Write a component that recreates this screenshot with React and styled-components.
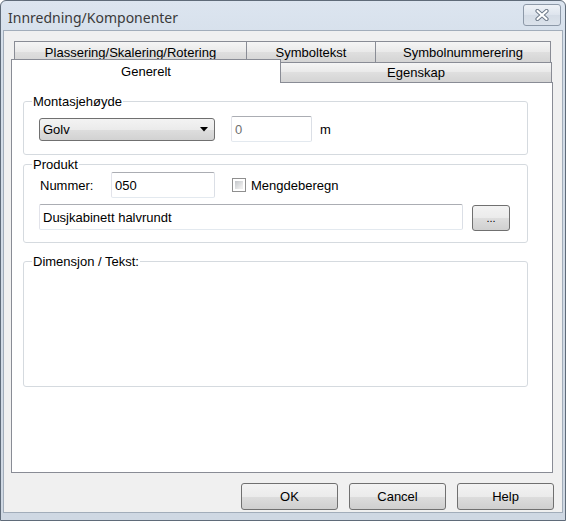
import React from "react";
import styled, { createGlobalStyle } from "styled-components";

const GlobalStyle = createGlobalStyle`
  html, body {
    margin: 0;
    padding: 0;
    background: #ffffff;
  }
  body {
    font-family: "Liberation Sans", Arial, sans-serif;
    font-size: 13px;
    color: #000;
  }
  * {
    box-sizing: border-box;
  }
`;

const backTabs = [
  { label: "Plassering/Skalering/Rotering", width: 233 },
  { label: "Symboltekst", width: 130 },
  { label: "Symbolnummerering", width: 176 },
];

const CloseIcon = () => (
  <svg width="16" height="12" viewBox="0 0 16 12">
    <path d="M3.5 2 L12.5 10 M12.5 2 L3.5 10" stroke="#6f7b8a" strokeWidth="4.2" strokeLinecap="round" fill="none" />
    <path d="M3.5 2 L12.5 10 M12.5 2 L3.5 10" stroke="#ffffff" strokeWidth="2.2" strokeLinecap="round" fill="none" />
  </svg>
);

const ComboArrow = () => (
  <svg width="8" height="5" viewBox="0 0 8 5">
    <path d="M0 0 H8 L4 4.5 Z" fill="#000" />
  </svg>
);

export default function App() {
  return (
    <>
      <GlobalStyle />
      <Window>
        <TitleBar>
          <Title>Innredning/Komponenter</Title>
          <CloseButton aria-label="Lukk">
            <CloseIcon />
          </CloseButton>
        </TitleBar>
        <Client>
          <Tabs>
            <TabRow $indent={3}>
              {backTabs.map((t, i) => (
                <Tab key={t.label} $width={t.width} $first={i === 0}>
                  {t.label}
                </Tab>
              ))}
            </TabRow>
            <TabRow $front>
              <ActiveTab>Generelt</ActiveTab>
              <Tab $width={271} $height={20} $noLeft>
                Egenskap
              </Tab>
            </TabRow>
          </Tabs>
          <Panel>
            <Group $top={11} $height={61}>
              <Legend>Montasjehøyde</Legend>
              <Row $padTop={7}>
                <Combo>
                  <span>Golv</span>
                  <ComboArrow />
                </Combo>
                <TextBox $width={81} $gap={16} $muted readOnly value="0" />
                <Unit>m</Unit>
              </Row>
            </Group>

            <Group $top={2} $height={86}>
              <Legend>Produkt</Legend>
              <Row>
                <FieldLabel>Nummer:</FieldLabel>
                <TextBox $width={104} readOnly value="050" />
                <CheckLabel>
                  <CheckBox />
                  Mengdeberegn
                </CheckLabel>
              </Row>
              <Row $padTop={6} $start>
                <TextBox $width={424} readOnly value="Dusjkabinett halvrundt" />
                <SmallButton>...</SmallButton>
              </Row>
            </Group>

            <Group $top={11} $height={133}>
              <Legend>Dimensjon / Tekst:</Legend>
            </Group>
          </Panel>
          <ButtonRow>
            <DialogButton>OK</DialogButton>
            <DialogButton>Cancel</DialogButton>
            <DialogButton>Help</DialogButton>
          </ButtonRow>
        </Client>
      </Window>
    </>
  );
}

//****** styling ******//

const Window = styled.div`
  width: 566px;
  height: 521px;
  border: 1px solid #5f6b79;
  border-radius: 6px 6px 0 0;
  background: linear-gradient(#dce5f0, #d3dde8 60px, #cfd8e3);
  display: flex;
  flex-direction: column;
  overflow: hidden;
`;

const TitleBar = styled.div`
  height: 29px;
  flex: none;
  display: flex;
  align-items: center;
  justify-content: space-between;
  padding: 1px 4px 0 7px;
`;

const Title = styled.span`
  font-family: "Noto Sans", "DejaVu Sans", sans-serif;
  font-size: 14px;
  color: #3a3a3a;
  padding-top: 2px;
`;

const CloseButton = styled.button`
  width: 38px;
  height: 22px;
  margin-top: -2px;
  padding: 0;
  border: 1px solid #8d99a8;
  border-radius: 3px;
  background: linear-gradient(#eef2f7, #dde4ed 50%, #d4dce6 50%, #dbe2eb);
  display: flex;
  align-items: center;
  justify-content: center;
`;

const Client = styled.div`
  flex: 1;
  margin: 0 2px 7px 2px;
  border: 1px solid #a2adba;
  background: #f0f0f0;
  padding: 10px 9px 0 7px;
  display: flex;
  flex-direction: column;
`;

const Tabs = styled.div`
  height: 41px;
  flex: none;
  display: flex;
  flex-direction: column;
`;

const TabRow = styled.div`
  display: flex;
  align-items: flex-end;
  height: ${(p) => (p.$front ? 20 : 21)}px;
  padding-left: ${(p) => p.$indent || 0}px;
`;

const Tab = styled.div`
  width: ${(p) => p.$width}px;
  height: ${(p) => p.$height || 21}px;
  margin-left: ${(p) => (p.$first || p.$noLeft ? 0 : -1)}px;
  border: 1px solid #898c95;
  border-bottom: none;
  ${(p) => p.$noLeft && "border-left: none;"}
  background: linear-gradient(#f5f5f5, #e9e9e9 50%, #dfdfdf 50%, #d4d4d4);
  display: flex;
  align-items: center;
  justify-content: center;
  font-size: 13px;
  white-space: nowrap;
`;

const ActiveTab = styled.div`
  position: relative;
  z-index: 2;
  width: 270px;
  height: 24px;
  margin-bottom: -1px;
  border: 1px solid #898c95;
  border-bottom: none;
  background: #ffffff;
  display: flex;
  align-items: center;
  justify-content: center;
  font-size: 13px;
`;

const Panel = styled.div`
  height: 391px;
  flex: none;
  border: 1px solid #898c95;
  background: #ffffff;
  display: flex;
  flex-direction: column;
`;

const Group = styled.fieldset`
  margin: ${(p) => p.$top}px 0 0 11px;
  width: 505px;
  height: ${(p) => p.$height}px;
  min-inline-size: 0;
  padding: 0;
  border: 1px solid #d5dadf;
  border-radius: 3px;
  flex: none;
`;

const Legend = styled.legend`
  margin-left: 8px;
  padding: 0 1px;
  font-size: 13px;
  line-height: 15px;
`;

const Row = styled.div`
  display: flex;
  align-items: ${(p) => (p.$start ? "flex-start" : "center")};
  padding: ${(p) => p.$padTop || 0}px 0 0 15px;
`;

const Combo = styled.div`
  width: 176px;
  height: 23px;
  border: 1px solid #707070;
  border-radius: 3px;
  background: linear-gradient(#f3f3f3, #ebebeb 50%, #dedede 50%, #d2d2d2);
  display: flex;
  align-items: center;
  justify-content: space-between;
  padding: 0 6px 0 3px;
  font-size: 13px;
`;

const TextBox = styled.input`
  width: ${(p) => p.$width}px;
  height: 26px;
  margin-left: ${(p) => p.$gap || 0}px;
  border: 1px solid;
  border-color: #abadb3 #dbdfe6 #e3e9ef #e2e3ea;
  border-radius: 2px;
  padding: 0 3px;
  font-family: "Liberation Sans", Arial, sans-serif;
  font-size: 13px;
  color: ${(p) => (p.$muted ? "#707070" : "#000")};
  background: #fff;
  outline: none;
`;

const Unit = styled.span`
  margin-left: 8px;
  font-size: 13px;
`;

const FieldLabel = styled.span`
  width: 72px;
  padding-left: 1px;
  font-size: 13px;
`;

const CheckLabel = styled.label`
  display: flex;
  align-items: center;
  gap: 5px;
  margin-left: 17px;
  font-size: 13px;
`;

const CheckBox = styled.span`
  width: 14px;
  height: 14px;
  border: 1px solid #8f8f8f;
  background: #fff;
  padding: 2px;
  display: block;
  &::after {
    content: "";
    display: block;
    width: 100%;
    height: 100%;
    background: linear-gradient(135deg, #c3c6ca, #eeeeee 80%);
  }
`;

const SmallButton = styled.button`
  width: 38px;
  height: 26px;
  margin: 1px 0 0 9px;
  padding: 0;
  border: 1px solid #707070;
  border-radius: 3px;
  background: linear-gradient(#f3f3f3, #ebebeb 50%, #dedede 50%, #d0d0d0);
  font-family: "Liberation Sans", Arial, sans-serif;
  font-size: 11px;
  color: #000;
`;

const ButtonRow = styled.div`
  display: flex;
  justify-content: flex-end;
  gap: 11px;
  margin: 10px -1px 0 0;
`;

const DialogButton = styled.button`
  width: 97px;
  height: 27px;
  padding: 0;
  border: 1px solid #707070;
  border-radius: 3px;
  background: linear-gradient(#f3f3f3, #ebebeb 50%, #dddddd 50%, #cfcfcf);
  font-family: "Liberation Sans", Arial, sans-serif;
  font-size: 13px;
  color: #000;
`;
